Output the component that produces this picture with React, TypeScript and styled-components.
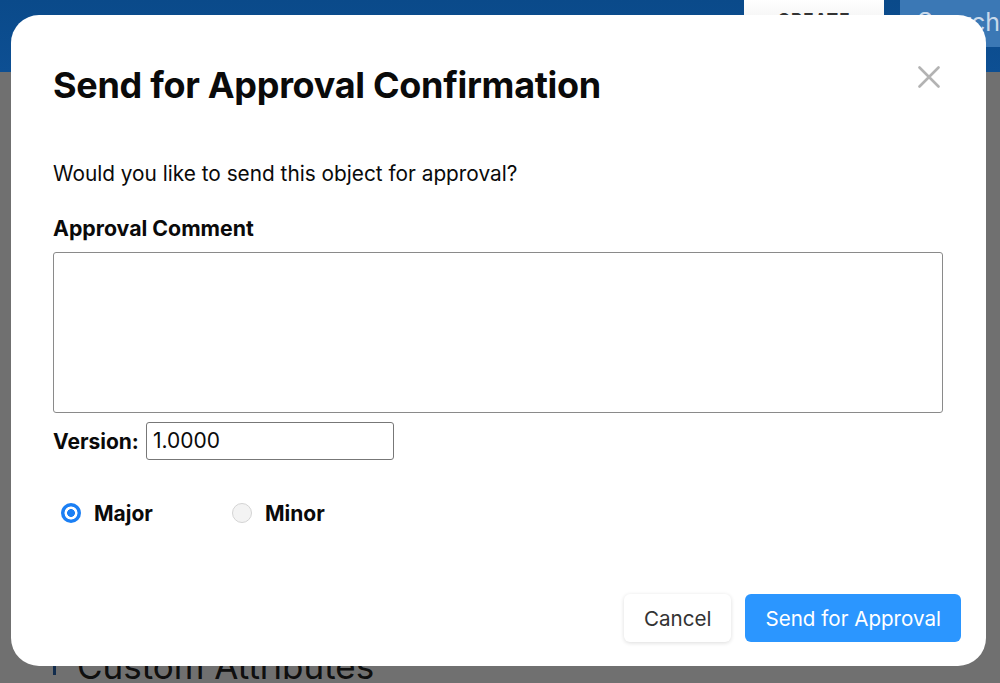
import styled, { createGlobalStyle } from 'styled-components';

const GlobalStyle = createGlobalStyle`
  html, body {
    margin: 0;
    padding: 0;
    background: #ffffff;
    font-family: Inter, 'Noto Sans', 'Liberation Sans', sans-serif;
    overflow: hidden;
  }
  * {
    box-sizing: border-box;
  }
`;

const Page = styled.div`
  width: 1000px;
  height: 683px;
  position: relative;
  overflow: hidden;
`;

const Header = styled.header`
  height: 72px;
  display: flex;
  align-items: flex-start;
  gap: 16px;
  padding-left: 744px;
  background: linear-gradient(#0a4a8a, #0d4f93);
  position: relative;
  z-index: 20;
`;

const CreateButton = styled.div`
  width: 148px;
  height: 36px;
  line-height: 40px;
  text-align: center;
  background: linear-gradient(#ffffff, #ececec);
  color: #333;
  font-weight: 700;
  font-size: 17px;
  letter-spacing: 1px;
`;

const SearchBox = styled.div`
  flex: 1;
  height: 47px;
  background: #3b78b5;
  color: #c9d9ea;
  font-size: 25px;
  padding: 7px 0 0 17px;
`;

const Content = styled.main`
  padding: 0 53px;
  display: flex;
  flex-direction: column;
`;

const Divider = styled.div<{ $top: number }>`
  margin-top: ${p => p.$top}px;
  height: 1px;
  background: #e4e4e4;
`;

const SectionTitle = styled.h2`
  margin: 409px 0 0;
  display: flex;
  align-items: flex-end;
  gap: 21px;
  font-size: 35px;
  font-weight: 400;
  color: #222;
  line-height: 44px;
  &::before {
    content: '';
    width: 3px;
    height: 24px;
    margin-bottom: 13px;
    background: #2a64b0;
  }
`;

const Backdrop = styled.div`
  position: fixed;
  inset: 0;
  background: rgba(0, 0, 0, 0.56);
  z-index: 10;
`;

const ModalLayer = styled.div`
  position: fixed;
  inset: 0;
  z-index: 30;
  display: flex;
  align-items: center;
  justify-content: center;
`;

const Modal = styled.div`
  position: relative;
  width: 975px;
  height: 651px;
  margin-left: -3px;
  margin-top: -2px;
  background: #ffffff;
  border-radius: 28px;
  padding: 48px 43px 24px 42px;
  display: flex;
  flex-direction: column;
  color: #0a0a0a;
`;

const Title = styled.h1`
  margin: 0;
  font-size: 36px;
  line-height: 44px;
  font-weight: 700;
  letter-spacing: -0.3px;
`;

const CloseButton = styled.button`
  position: absolute;
  top: 51px;
  right: 46px;
  width: 22px;
  height: 22px;
  padding: 0;
  border: 0;
  background: none;
  cursor: pointer;
`;

const Message = styled.p`
  margin: 53px 0 0;
  font-size: 20.8px;
  line-height: 28px;
`;

const FieldLabel = styled.label`
  display: block;
  margin-top: 26px;
  font-size: 21.3px;
  line-height: 28px;
  font-weight: 700;
`;

const CommentBox = styled.div`
  margin-top: 10px;
  height: 161px;
  border: 1.5px solid #8a8a8a;
  border-radius: 3px;
`;

const VersionRow = styled.div`
  margin-top: 9px;
  display: flex;
  align-items: center;
  gap: 7px;
`;

const InlineLabel = styled.span`
  font-size: 21px;
  font-weight: 700;
`;

const VersionInput = styled.div`
  width: 248px;
  height: 38px;
  border: 1px solid #777;
  border-radius: 3px;
  font-size: 21px;
  line-height: 36px;
  padding-left: 6px;
`;

const RadioRow = styled.div`
  margin-top: 39px;
  display: flex;
  align-items: center;
  height: 28px;
`;

const RadioOption = styled.div`
  width: 171px;
  padding-left: 8px;
  display: flex;
  align-items: center;
  gap: 13px;
  font-size: 21px;
  font-weight: 700;
`;

const RadioDot = styled.span<{ $checked?: boolean }>`
  width: 20px;
  height: 20px;
  border-radius: 50%;
  background: ${p =>
    p.$checked
      ? 'radial-gradient(circle, #1b7ff4 0 3.6px, #ffffff 4.2px 6.2px, #1b7ff4 6.8px)'
      : '#f3f3f3'};
  border: ${p => (p.$checked ? 'none' : '1px solid #d4d4d4')};
`;

const Footer = styled.div`
  margin-top: auto;
  display: flex;
  justify-content: flex-end;
  gap: 14px;
  margin-right: -18px;
`;

const Button = styled.button<{ $primary?: boolean }>`
  height: 48px;
  padding: 0 20px;
  border: 0;
  border-radius: 6px;
  font-family: inherit;
  font-size: 20.6px;
  background: ${p => (p.$primary ? '#2b96ff' : '#ffffff')};
  color: ${p => (p.$primary ? '#ffffff' : '#333333')};
  box-shadow: ${p =>
    p.$primary ? 'none' : '0 1px 4px rgba(0, 0, 0, 0.14)'};
`;

function App() {
  return (
    <Page>
      <GlobalStyle />
      <Header>
        <CreateButton>CREATE</CreateButton>
        <SearchBox>Search</SearchBox>
      </Header>
      <Content>
        <Divider $top={82} />
        <Divider $top={79} />
        <SectionTitle>Custom Attributes</SectionTitle>
      </Content>
      <Backdrop />
      <ModalLayer>
        <Modal>
          <Title>Send for Approval Confirmation</Title>
          <CloseButton aria-label='Close'>
            <svg width='22' height='22' viewBox='0 0 22 22'>
              <path
                d='M1.5 1.5 L20.5 20.5 M20.5 1.5 L1.5 20.5'
                stroke='#b3b3b3'
                strokeWidth='2.6'
                strokeLinecap='round'
              />
            </svg>
          </CloseButton>
          <Message>Would you like to send this object for approval?</Message>
          <FieldLabel>Approval Comment</FieldLabel>
          <CommentBox />
          <VersionRow>
            <InlineLabel>Version:</InlineLabel>
            <VersionInput>1.0000</VersionInput>
          </VersionRow>
          <RadioRow>
            <RadioOption>
              <RadioDot $checked />
              Major
            </RadioOption>
            <RadioOption>
              <RadioDot />
              Minor
            </RadioOption>
          </RadioRow>
          <Footer>
            <Button>Cancel</Button>
            <Button $primary>Send for Approval</Button>
          </Footer>
        </Modal>
      </ModalLayer>
    </Page>
  );
}

export default App;
